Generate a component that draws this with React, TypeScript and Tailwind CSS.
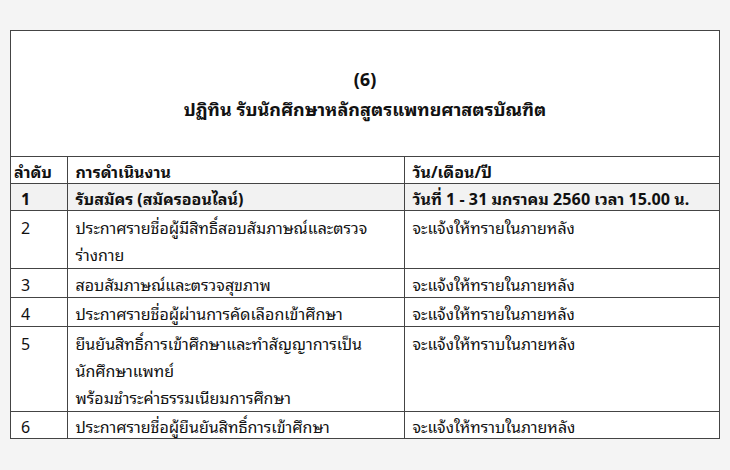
const ROWS = [
  { no: "1", task: ["รับสมัคร (สมัครออนไลน์)"], date: "วันที่ 1 - 31 มกราคม 2560 เวลา 15.00 น.", bold: true, lh: "leading-[23px]" },
  { no: "2", task: ["ประกาศรายชื่อผู้มีสิทธิ์สอบสัมภาษณ์และตรวจ", "ร่างกาย"], date: "จะแจ้งให้ทรายในภายหลัง", lh: "leading-[27px]" },
  { no: "3", task: ["สอบสัมภาษณ์และตรวจสุขภาพ"], date: "จะแจ้งให้ทรายในภายหลัง", lh: "leading-[25px]" },
  { no: "4", task: ["ประกาศรายชื่อผู้ผ่านการคัดเลือกเข้าศึกษา"], date: "จะแจ้งให้ทรายในภายหลัง", lh: "leading-[25px]" },
  {
    no: "5",
    task: ["ยืนยันสิทธิ์การเข้าศึกษาและทำสัญญาการเป็น", "นักศึกษาแพทย์", "พร้อมชำระค่าธรรมเนียมการศึกษา"],
    date: "จะแจ้งให้ทราบในภายหลัง",
    lh: "leading-[27px]",
  },
  { no: "6", task: ["ประกาศรายชื่อผู้ยืนยันสิทธิ์การเข้าศึกษา"], date: "จะแจ้งให้ทราบในภายหลัง", lh: "leading-[23px]" },
];

const App = () => {
  return (
    <div
      className="w-[730px] h-[470px] bg-[#f4f4f4] pt-[30px] pl-[10px] text-[#111] overflow-hidden"
      style={{ fontFamily: '"Noto Sans Thai Looped", Loma, Tahoma, "Noto Sans Thai", "Noto Sans", sans-serif' }}
    >
      <div className="w-[710px] border border-[#444] bg-white">
        <div className="h-[125px] flex flex-col items-center justify-center font-bold text-[18px] leading-[30px] pb-[2px]">
          <div>(6)</div>
          <div>ปฏิทิน รับนักศึกษาหลักสูตรแพทยศาสตรบัณฑิต</div>
        </div>

        <table className="w-full border-collapse text-[16px]">
          <colgroup>
            <col className="w-[56px]" />
            <col className="w-[337px]" />
            <col />
          </colgroup>
          <tbody>
            <tr className="border-t border-[#444] font-bold leading-[23px]">
              <td className="p-0 pt-[3px] pl-[3px] align-top">ลำดับ</td>
              <td className="border-l border-[#444] p-0 pt-[3px] pl-[8px] align-top">การดำเนินงาน</td>
              <td className="border-l border-[#444] p-0 pt-[3px] pl-[8px] align-top">วัน/เดือน/ปี</td>
            </tr>
            {ROWS.map((row) => (
              <tr
                key={row.no}
                className={
                  row.bold
                    ? `border-t border-[#444] bg-[#f2f2f2] font-bold ${row.lh}`
                    : `border-t border-[#444] ${row.lh}`
                }
              >
                <td className="p-0 pt-[3px] pl-[10px] align-top">{row.no}</td>
                <td className="border-l border-[#444] p-0 pt-[3px] pl-[8px] align-top">
                  {row.task.map((line) => (
                    <div key={line}>{line}</div>
                  ))}
                </td>
                <td className="border-l border-[#444] p-0 pt-[3px] pl-[8px] align-top">{row.date}</td>
              </tr>
            ))}
          </tbody>
        </table>
      </div>
    </div>
  );
};

export default App;
